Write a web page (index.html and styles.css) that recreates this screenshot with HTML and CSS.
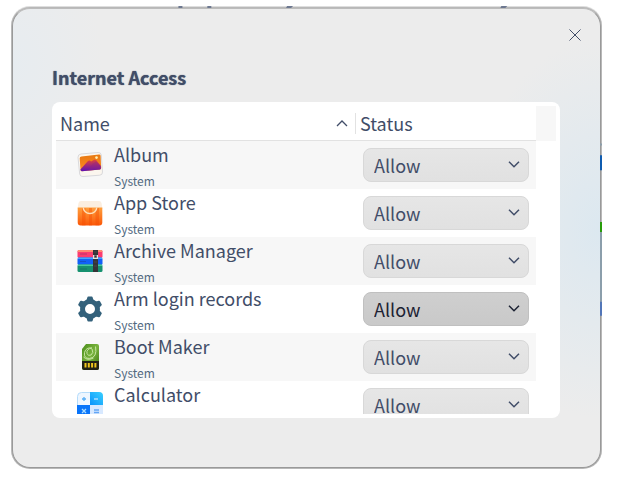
FILE: index.html
```
<!DOCTYPE html>
<html lang="en">
<head>
<meta charset="utf-8">
<title>Internet Access</title>
<link rel="stylesheet" href="styles.css">
</head>
<body>
<main class="window">
  <svg class="edge-top" viewBox="0 0 589 2" preserveAspectRatio="none" aria-hidden="true"><path fill="#6d7890" d="M166 0h4v2h-4zM195 0h4v2h-4zM275 0h6l-2 2h-5zM490 0h6l-2 2h-5z"/></svg>
  <svg class="edge-right" viewBox="0 0 2 460" preserveAspectRatio="none" aria-hidden="true"><path fill="#0f5cb0" d="M0 147h2v15H0z"/><path fill="#279c0a" d="M0 214h2v10H0z"/><path fill="#8b9eab" d="M0 224h2v70H0zM0 135h2v2H0z"/><path fill="#5276b8" d="M0 294h2v14H0z"/></svg>
  <header class="titlebar">
    <button class="close" type="button" aria-label="Close"><svg width="12" height="12" viewBox="0 0 12 12"><path d="M.5 .5l11 11M11.500 .5l-11 11" fill="none" stroke="#414d68"/></svg></button>
  </header>
  <h1 class="title">Internet Access</h1>
  <section class="panel">
    <div class="scroller">
      <table class="apps">
        <colgroup><col><col class="col-status"></colgroup>
        <thead>
          <tr>
            <th scope="col"><div class="head head-name">Name<svg width="12" height="7" viewBox="0 0 12 7"><path d="M1 6l5-5 5 5" fill="none" stroke="#414d68" stroke-width="1.300"/></svg></div></th>
            <th scope="col"><div class="head head-status">Status</div></th>
          </tr>
        </thead>
        <tbody>
          <tr>
            <td><div class="app">
              <svg class="icon" viewBox="0 0 26 26"><defs><linearGradient id="sun" x2="0" y2="1"><stop stop-color="#e87910"/><stop offset="1" stop-color="#ff8a24"/></linearGradient><linearGradient id="hill" x2="0" y2="1"><stop stop-color="#e2433b"/><stop offset="1" stop-color="#5a10b8"/></linearGradient></defs><path d="M4 2l17-1.500q3-.2 3.300 2.500l1.200 17q.2 3-2.800 3.200L6 24.500q-3 .2-3.300-2.500L1 5.500Q.8 2.300 4 2z" fill="#fbf6ee" stroke="#d9d9dc"/><path d="M4.500 4.500l17.500-2q1.400-.1 1.600 1.200l.6 12.300q0 1.300-1.200 1.500L5 19.300q-1.300.1-1.500-1L2.700 6.200q0-1.500 1.800-1.700z" fill="url(#sun)"/><path d="M3.400 17.500L10.500 9.500q1.800-2 3.600 0l3-1.800q1-.5 2 .4l4.800 5.900v2q0 1.200-1 1.400L5 19.300q-1.400 0-1.600-1.800z" fill="url(#hill)"/><path d="M11 18.600l5-7 3-2 5.200 6q0 1.600-1.200 1.900z" fill="#8c2388" opacity=".4"/><circle cx="19.500" cy="5.600" r="1.300" fill="#fff1b8"/></svg>
              <div class="label"><span class="name" id="a1">Album</span><span class="kind">System</span></div></div></td>
            <td><div class="combo"><select aria-labelledby="a1"><option>Allow</option><option>Ask</option></select><svg width="12" height="7" viewBox="0 0 12 7"><path d="M1 .7l5 5 5-5"/></svg></div></td>
          </tr>
          <tr>
            <td><div class="app">
              <svg class="icon" viewBox="0 0 26 26"><defs><linearGradient id="bag" x2="0" y2="1"><stop stop-color="#ffa03e"/><stop offset="1" stop-color="#fb5708"/></linearGradient></defs><path d="M4 1h18q2 0 2.500 2l1 6H.5l1-6Q2 1 4 1z" fill="#fbeee0"/><path d="M.7 7.500h24.600v15q0 3-3 3H3.700q-3 0-3-3z" fill="url(#bag)"/><path d="M5 8h3.500v17.500H5zM12 8h3v17.500h-3zM18.500 8H22v17.500h-3.500z" fill="#f54a00" opacity=".4"/><path d="M6.300 7.500a6.700 6 0 0 0 13.400 0" fill="none" stroke="#ffe0b8" stroke-width="1.500"/></svg>
              <div class="label"><span class="name" id="a2">App Store</span><span class="kind">System</span></div></div></td>
            <td><div class="combo"><select aria-labelledby="a2"><option>Allow</option><option>Ask</option></select><svg width="12" height="7" viewBox="0 0 12 7"><path d="M1 .7l5 5 5-5"/></svg></div></td>
          </tr>
          <tr>
            <td><div class="app">
              <svg class="icon" viewBox="0 0 26 26"><rect x=".5" y="2" width="25" height="8" rx="1.500" fill="#fc3c70"/><path d="M2 2h22q1.500 0 1.500 2H.5q0-2 1.500-2z" fill="#ff8b70"/><rect x=".5" y="9.500" width="25" height="7.500" rx="1.500" fill="#1260f8"/><path d="M1 9.500h24V11H1z" fill="#45a5ff"/><rect x=".5" y="16.500" width="25" height="7.500" rx="1.500" fill="#16916f"/><path d="M1 16.500h24V18H1z" fill="#48c6a0"/><path d="M3 6h7M3 13.500h6M3 21h7" stroke="#222b60" opacity=".3"/><path d="M16 2h5v22h-5z" fill="#343438"/><path d="M16 7h5v4h-5z" fill="#e1e1e2"/><path d="M17.500 7.500h2v2h-2zM17 4h3M17 14h3M17 18h3" fill="#333" stroke="#555" stroke-width=".6"/></svg>
              <div class="label"><span class="name" id="a3">Archive Manager</span><span class="kind">System</span></div></div></td>
            <td><div class="combo"><select aria-labelledby="a3"><option>Allow</option><option>Ask</option></select><svg width="12" height="7" viewBox="0 0 12 7"><path d="M1 .7l5 5 5-5"/></svg></div></td>
          </tr>
          <tr>
            <td><div class="app">
              <svg class="icon" viewBox="0 0 26 26"><g fill="#33617b"><path fill-rule="evenodd" d="M13 3a10 10 0 1 0 0 20 10 10 0 0 0 0-20zM13 8a5 5 0 1 1 0 10 5 5 0 0 1 0-10z"/><path id="tooth" d="M9.300 5l1-3.600q.2-.9 1-.9h3.400q.8 0 1 .9l1 3.600z"/><use href="#tooth" transform="rotate(60 13 13)"/><use href="#tooth" transform="rotate(120 13 13)"/><use href="#tooth" transform="rotate(180 13 13)"/><use href="#tooth" transform="rotate(240 13 13)"/><use href="#tooth" transform="rotate(300 13 13)"/></g></svg>
              <div class="label"><span class="name" id="a4">Arm login records</span><span class="kind">System</span></div></div></td>
            <td><div class="combo combo-active"><select aria-labelledby="a4"><option>Allow</option><option>Ask</option></select><svg width="12" height="7" viewBox="0 0 12 7"><path d="M1 .7l5 5 5-5"/></svg></div></td>
          </tr>
          <tr>
            <td><div class="app">
              <svg class="icon" viewBox="0 0 26 26"><defs><linearGradient id="card" x2="1" y2="1"><stop stop-color="#4b8e1c"/><stop offset=".5" stop-color="#79b33d"/><stop offset="1" stop-color="#39700f"/></linearGradient></defs><path d="M9 0h11q2 0 2 2v22q0 2-2 2H7q-2 0-2-2V5z" fill="url(#card)"/><path d="M5 17h17v7q0 2-2 2H7q-2 0-2-2z" fill="#222215"/><path d="M8.500 19v4.500M11.800 19v4.500M15.100 19v4.500M18.400 19v4.500" stroke="#f0c51d" stroke-width="2"/><path d="M18.500 2.500q2 11-6 12-6 0-5-6Q9 3 15 4q-6 1-5 5.500 1 3 4 1.500 3-2 1-6M6.500 13q4 4 10 1" fill="none" stroke="#c6e5a0"/></svg>
              <div class="label"><span class="name" id="a5">Boot Maker</span><span class="kind">System</span></div></div></td>
            <td><div class="combo"><select aria-labelledby="a5"><option>Allow</option><option>Ask</option></select><svg width="12" height="7" viewBox="0 0 12 7"><path d="M1 .7l5 5 5-5"/></svg></div></td>
          </tr>
          <tr>
            <td><div class="app">
              <svg class="icon" viewBox="0 0 26 26"><defs><linearGradient id="key" x1="1" x2="0" y2="1"><stop stop-color="#3ad0ff"/><stop offset="1" stop-color="#0a93fb"/></linearGradient></defs><rect x=".5" y=".5" width="25" height="25" rx="4" fill="#eef6ff" stroke="#b5dcfb"/><path d="M13 0h9q4 0 4 4v9H13z" fill="url(#key)"/><path d="M0 13h13v13H4q-4 0-4-4z" fill="#0874fa"/><path d="M13 13h13v9q0 4-4 4h-9z" fill="#d8e9ff"/><path d="M5 7h4M7 5v4" stroke="#58aef6" stroke-width="1.300"/><path d="M17 7h4M5 17l4 4M9 17l-4 4" stroke="#a9dcff" stroke-width="1.300"/><path d="M17 18h5M17 20.500h5" stroke="#63a6f5" stroke-width="1.300"/></svg>
              <div class="label"><span class="name" id="a6">Calculator</span></div></div></td>
            <td><div class="combo"><select aria-labelledby="a6"><option>Allow</option><option>Ask</option></select><svg width="12" height="7" viewBox="0 0 12 7"><path d="M1 .7l5 5 5-5"/></svg></div></td>
          </tr>
        </tbody>
      </table>
      <div class="gutter"></div>
    </div>
  </section>
</main>
</body>
</html>
```
FILE: styles.css
```
* { box-sizing: border-box; }

body {
  margin: 0;
  height: 100vh;
  padding: 8px 22px 18px 12px;
  background: #fff;
  color: #414d68;
  font-family: "Noto Sans CJK SC", "Noto Sans", sans-serif;
  font-size: 18px;
}

.window {
  position: relative;
  height: 100%;
  display: flex;
  flex-direction: column;
  padding: 0 40px 49px 39px;
  border: 1px solid #999;
  border-top-color: #bcbcbc;
  border-radius: 18px;
  background:
    radial-gradient(ellipse 130px 190px at 100% 48%, #dce8f0, transparent),
    radial-gradient(ellipse 90px 130px at 0% 12%, #e7ecf0, transparent),
    #ececec;
  box-shadow: 0 0 0 1px #b8b8b8, 0 -1px 0 1px #dedede;
}

.edge-top {
  position: absolute;
  left: 0;
  top: -3px;
  width: 100%;
  height: 2px;
}

.edge-right {
  position: absolute;
  right: -2px;
  top: 0;
  width: 2px;
  height: 100%;
}

.titlebar {
  display: flex;
  justify-content: flex-end;
  height: 54px;
  flex: none;
}

.close {
  width: 32px;
  height: 32px;
  margin: 10px -31px 0 0;
  padding: 0;
  border: 0;
  background: none;
  display: grid;
  place-items: center;
}

.title {
  margin: 0;
  height: 39px;
  flex: none;
  font-size: 18px;
  font-weight: 700;
  line-height: 28px;
  text-shadow: 0 0 1px #414d68;
}

.panel {
  flex: 1;
  min-height: 0;
  padding: 4px;
  border-radius: 8px;
  background: #fff;
}

.scroller {
  display: flex;
  align-items: flex-start;
  height: 100%;
  overflow: hidden;
}

.gutter {
  width: 20px;
  height: 35px;
  flex: none;
  background: #f7f7f7;
}

.apps {
  flex: 1;
  table-layout: fixed;
  border-collapse: collapse;
}

.col-status { width: 181px; }

.apps th, .apps td {
  padding: 0;
  text-align: left;
  font-weight: 400;
}

.apps thead tr { box-shadow: inset 0 -1px #e2e2e2; }

.apps tbody tr:nth-child(odd) { background: #f7f7f7; }

.head {
  display: flex;
  align-items: center;
  height: 35px;
  line-height: 35px;
}

.head-name {
  justify-content: space-between;
  padding: 0 7px 0 4px;
}

.head-status::before {
  content: "";
  width: 1px;
  height: 21px;
  margin-right: 4px;
  background: #e2e2e2;
}

.app {
  display: flex;
  height: 48px;
}

.icon {
  width: 26px;
  height: 26px;
  flex: none;
  margin: 11px 11px 0 21px;
}

.label {
  display: flex;
  flex-direction: column;
}

.name { line-height: 26px; }

.kind {
  margin-top: 6px;
  font-size: 12px;
  line-height: 16px;
  color: #526a7f;
}

.combo {
  position: relative;
  height: 34px;
  margin: 0 7px 0 8px;
  color: #414d68;
}

.combo select {
  display: block;
  width: 100%;
  height: 100%;
  padding: 0 10px;
  border: 1px solid #d8d8d8;
  border-radius: 8px;
  appearance: none;
  background: linear-gradient(#e6e6e6, #e1e1e1);
  color: inherit;
  font: inherit;
}

.combo svg {
  position: absolute;
  right: 9px;
  top: 13px;
  fill: none;
  stroke: currentColor;
  stroke-width: 1.5px;
  pointer-events: none;
}

.combo-active { color: #1c2233; }

.combo-active select {
  border-color: #c0c0c0;
  background: linear-gradient(#cfcfcf, #c9c9c9);
}
```
